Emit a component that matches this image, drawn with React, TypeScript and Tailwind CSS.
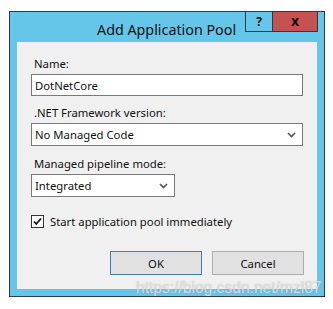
import React from "react";

const Chevron = () => (
  <svg width="9" height="6" viewBox="0 0 9 6" className="block">
    <path d="M1 1 L4.5 4.5 L8 1" stroke="#555" strokeWidth="1.6" fill="none" />
  </svg>
);

export default function App() {
  const font = { fontFamily: '"Noto Sans", "Open Sans", sans-serif' };
  return (
    <div className="w-[333px] h-[309px] bg-white relative overflow-hidden" style={font}>
      <div className="ml-[9px] pt-[11px]">
        <div className="w-[316px] h-[286px] border border-[#2a3a4c] bg-[#66c6ea] flex flex-col">
          {/* title bar */}
          <div className="h-[30px] flex items-start">
            <div className="flex-1 whitespace-nowrap text-[14.3px] leading-[20px] pt-[8px] pl-[87px] text-[#111]">
              Add Application Pool
            </div>
            <div className="flex h-[20px] mr-[6px]">
              <div className="w-[28px] h-[20px] border border-[#2a3a4c] border-t-0 flex items-center justify-center text-[12px] font-bold text-[#111]">
                ?
              </div>
              <div className="w-[45px] h-[20px] bg-[#c75050] border border-[#2a3a4c] border-t-0 border-l-0 flex items-center justify-center text-[14px] font-bold text-[#111] pb-[2px]">
                x
              </div>
            </div>
          </div>
          {/* client */}
          <div className="mx-[7px] w-[300px] h-[247px] bg-[#f0f0f0] pl-[14px] text-[11.3px] text-[#111] flex flex-col">
            <div className="pt-[14px] h-[29px] leading-[15px] pl-[3px]">Name:</div>
            <div className="mt-[3px] w-[272px] h-[22px] bg-white border border-[#7a7a7a] flex items-center pl-[3px] leading-[15px]">
              DotNetCore
            </div>
            <div className="mt-[9px] h-[15px] leading-[15px] pl-[3px]">.NET Framework version:</div>
            <div className="mt-[3px] w-[272px] h-[23px] bg-white border border-[#7a7a7a] flex items-center justify-between pl-[3px] pr-[6px] leading-[15px]">
              <span>No Managed Code</span>
              <Chevron />
            </div>
            <div className="mt-[10px] h-[15px] leading-[15px] pl-[3px]">Managed pipeline mode:</div>
            <div className="mt-[3px] w-[144px] h-[23px] bg-white border border-[#7a7a7a] flex items-center justify-between pl-[3px] pr-[6px] leading-[15px]">
              <span>Integrated</span>
              <Chevron />
            </div>
            <div className="mt-[18px] flex items-center h-[13px]">
              <div className="w-[13px] h-[13px] bg-white border border-[#333] flex items-center justify-center">
                <svg width="11" height="11" viewBox="0 0 11 11">
                  <path d="M2 5.5 L4.3 8 L9 2.5" stroke="#111" strokeWidth="1.8" fill="none" />
                </svg>
              </div>
              <span className="ml-[6px] leading-[15px]">Start application pool immediately</span>
            </div>
            <div className="mt-[23px] flex pl-[79px] gap-[10px]">
              <div className="w-[92px] h-[24px] bg-[#e1e1e1] border border-[#3c7fb1] flex items-center justify-center leading-[15px]">
                OK
              </div>
              <div className="w-[92px] h-[24px] bg-[#e1e1e1] border border-[#adadad] flex items-center justify-center leading-[15px]">
                Cancel
              </div>
            </div>
          </div>
        </div>
      </div>
      <div
        className="absolute left-[136px] top-[279px] whitespace-nowrap text-[15.6px] leading-[17px] text-[#e8e8e8]/85"
        style={{ fontFamily: '"Liberation Sans", Arial, sans-serif', textShadow: "0 0 1px rgba(120,120,120,0.5)" }}
      >
        https://blog.csdn.net/mzl87
      </div>
    </div>
  );
}
